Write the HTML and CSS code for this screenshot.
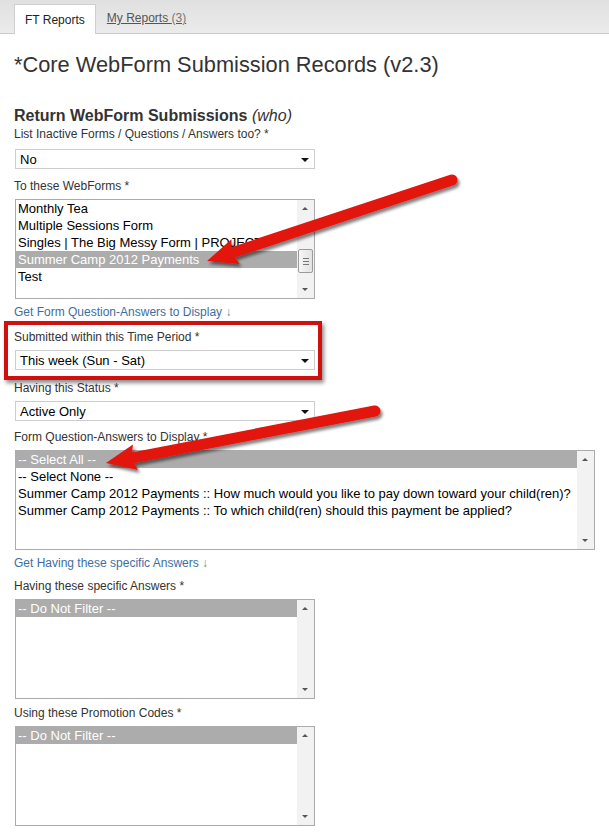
FILE: index.html
```html
<!DOCTYPE html>
<html>
<head>
<meta charset="utf-8">
<link rel="stylesheet" href="styles.css">
</head>
<body>
<div class="tabbar">
  <div class="tab active">FT Reports</div>
  <a class="tab link-tab">My Reports <span class="count">(3)</span></a>
</div>
<div class="content">
  <h1 class="title">*Core WebForm Submission Records (v2.3)</h1>
  <h2 class="section">Return WebForm Submissions <em>(who)</em></h2>

  <div class="label">List Inactive Forms / Questions / Answers too? *</div>
  <div class="select first"><span>No</span><i class="caret"></i></div>

  <div class="label gap">To these WebForms *</div>
  <div class="listbox">
    <div class="items">
      <div class="opt">Monthly Tea</div>
      <div class="opt">Multiple Sessions Form</div>
      <div class="opt">Singles | The Big Messy Form | PROJECT</div>
      <div class="opt sel">Summer Camp 2012 Payments</div>
      <div class="opt">Test</div>
    </div>
    <div class="sbar"><div class="sbtn up"></div><div class="track"><div class="thumb"><b></b><b></b><b></b></div></div><div class="sbtn down"></div></div>
  </div>
  <a class="getlink">Get Form Question-Answers to Display <span class="darr">↓</span></a>

  <div class="redbox">
    <div class="label">Submitted within this Time Period *</div>
    <div class="select"><span>This week (Sun - Sat)</span><i class="caret"></i></div>
  </div>

  <div class="label">Having this Status *</div>
  <div class="select"><span>Active Only</span><i class="caret"></i></div>

  <div class="label gap3">Form Question-Answers to Display *</div>
  <div class="listbox wide">
    <div class="items">
      <div class="opt sel">-- Select All --</div>
      <div class="opt">-- Select None --</div>
      <div class="opt">Summer Camp 2012 Payments :: How much would you like to pay down toward your child(ren)?</div>
      <div class="opt">Summer Camp 2012 Payments :: To which child(ren) should this payment be applied?</div>
    </div>
    <div class="sbar"><div class="sbtn up"></div><div class="track"></div><div class="sbtn down"></div></div>
  </div>
  <a class="getlink">Get Having these specific Answers <span class="darr">↓</span></a>

  <div class="label gap4">Having these specific Answers *</div>
  <div class="listbox">
    <div class="items">
      <div class="opt sel">-- Do Not Filter --</div>
    </div>
    <div class="sbar"><div class="sbtn up"></div><div class="track"></div><div class="sbtn down"></div></div>
  </div>

  <div class="label gap2">Using these Promotion Codes *</div>
  <div class="listbox">
    <div class="items">
      <div class="opt sel">-- Do Not Filter --</div>
    </div>
    <div class="sbar"><div class="sbtn up"></div><div class="track"></div><div class="sbtn down"></div></div>
  </div>
</div>

<svg class="arrows" width="609" height="834" viewBox="0 0 609 834">
  <defs>
    <filter id="sh" x="-20%" y="-40%" width="140%" height="180%">
      <feDropShadow dx="2" dy="3" stdDeviation="1.6" flood-color="#000" flood-opacity="0.5"/>
    </filter>
  </defs>
  <g filter="url(#sh)">
    <g transform="translate(452,180) rotate(161.7)">
      <line x1="0" y1="0" x2="236" y2="0" stroke="#e3140f" stroke-width="11" stroke-linecap="round"/>
      <polygon points="228,-13 258,0 228,13 232,0" fill="#e3140f"/>
    </g>
  </g>
  <g filter="url(#sh)">
    <g transform="translate(375,411) rotate(169.06)">
      <line x1="0" y1="0" x2="252" y2="0" stroke="#e3140f" stroke-width="11" stroke-linecap="round"/>
      <polygon points="244,-13 274,0 244,13 248,0" fill="#e3140f"/>
    </g>
  </g>
</svg>
</body>
</html>
```

FILE: styles.css
```css
html, body {
  margin: 0;
  padding: 0;
  background: #fff;
}
body {
  position: relative;
  width: 609px;
  height: 834px;
  overflow: hidden;
  font-family: "Liberation Sans", Arial, sans-serif;
  color: #333;
}
.tabbar {
  height: 33px;
  border-bottom: 1px solid #c9c9c9;
  background: linear-gradient(#e0e0e0, #ebebeb);
  display: flex;
  align-items: flex-end;
  padding-left: 14px;
}
.tab {
  font-size: 12px;
  height: 29px;
  line-height: 29px;
  box-sizing: border-box;
}
.tab.active {
  background: #fff;
  border: 1px solid #cfcfcf;
  border-bottom: none;
  height: 30px;
  margin-bottom: -1px;
  padding: 0 10px;
  color: #222;
  line-height: 30px;
}
.link-tab {
  margin-left: 11px;
  color: #555;
  text-decoration: underline;
  line-height: 28px;
}
.link-tab .count { color: #777; }
.content {
  padding: 0 14px;
}
.title {
  margin: 19px 0 0;
  font-size: 21.8px;
  font-weight: normal;
  line-height: 24px;
  color: #333;
}
.section {
  margin: 29px 0 0;
  font-size: 16px;
  font-weight: bold;
  line-height: 20px;
  color: #333;
}
.section em {
  font-weight: normal;
  font-style: italic;
}
.label {
  font-size: 12px;
  line-height: 16px;
  color: #333;
  margin-bottom: 5px;
}
.label.gap { margin-top: 9px; }
.label.gap2 { margin-top: 6px; }
.label.gap3 { margin-top: 8px; }
.label.gap4 { margin-top: 7px; }
.select {
  box-sizing: border-box;
  width: 300px;
  height: 20px;
  margin: 2px 0 8px 1px;
  border: 1px solid #cdcdcd;
  background: #fff;
  display: flex;
  align-items: center;
  justify-content: space-between;
  padding: 0 5px 0 4px;
  font-size: 13px;
  color: #000;
}
.select.first { margin-top: 7px; }
.caret {
  width: 0;
  height: 0;
  border-left: 4px solid transparent;
  border-right: 4px solid transparent;
  border-top: 4px solid #111;
  margin-top: 2px;
}
.listbox {
  box-sizing: border-box;
  width: 300px;
  height: 100px;
  margin-left: 1px;
  border: 1px solid #ababab;
  display: flex;
  background: #fff;
}
.listbox.wide { width: 580px; }
.items {
  flex: 1;
  overflow: hidden;
}
.opt {
  height: 17px;
  line-height: 17px;
  font-size: 13px;
  color: #000;
  padding-left: 2px;
  white-space: nowrap;
  overflow: hidden;
}
.opt.sel {
  background: #acacac;
  color: #fff;
}
.sbar {
  width: 17px;
  display: flex;
  flex-direction: column;
  background: #f2f2f2;
}
.sbtn {
  height: 17px;
  position: relative;
}
.sbtn::after {
  content: "";
  position: absolute;
  left: 5px;
  width: 0;
  height: 0;
  border-left: 3px solid transparent;
  border-right: 3px solid transparent;
}
.sbtn.up::after {
  top: 7px;
  border-bottom: 3px solid #555;
}
.sbtn.down::after {
  top: 7px;
  border-top: 3px solid #555;
}
.track {
  flex: 1;
  position: relative;
}
.thumb {
  position: absolute;
  left: 1px;
  top: 32px;
  width: 13px;
  height: 22px;
  border: 1px solid #9a9a9a;
  border-radius: 2px;
  background: linear-gradient(90deg, #f6f6f6, #e2e2e2);
  display: flex;
  flex-direction: column;
  justify-content: center;
  align-items: center;
  gap: 2px;
}
.thumb b {
  display: block;
  width: 6px;
  height: 1px;
  background: #777;
}
.getlink {
  display: block;
  margin-top: 5px;
  font-size: 12px;
  line-height: 16px;
  color: #3d6ea3;
}
.darr { color: #6688aa; }
.redbox {
  margin: 1px 0 0 -10px;
  width: 304px;
  border: 4px solid #d0100e;
  padding: 4px 0 6px 6px;
  box-shadow: 2px 3px 4px rgba(0, 0, 0, 0.45);
}
.redbox .select { margin-top: 3px; margin-bottom: 0; }
.arrows {
  position: absolute;
  left: 0;
  top: 0;
  pointer-events: none;
}
```
